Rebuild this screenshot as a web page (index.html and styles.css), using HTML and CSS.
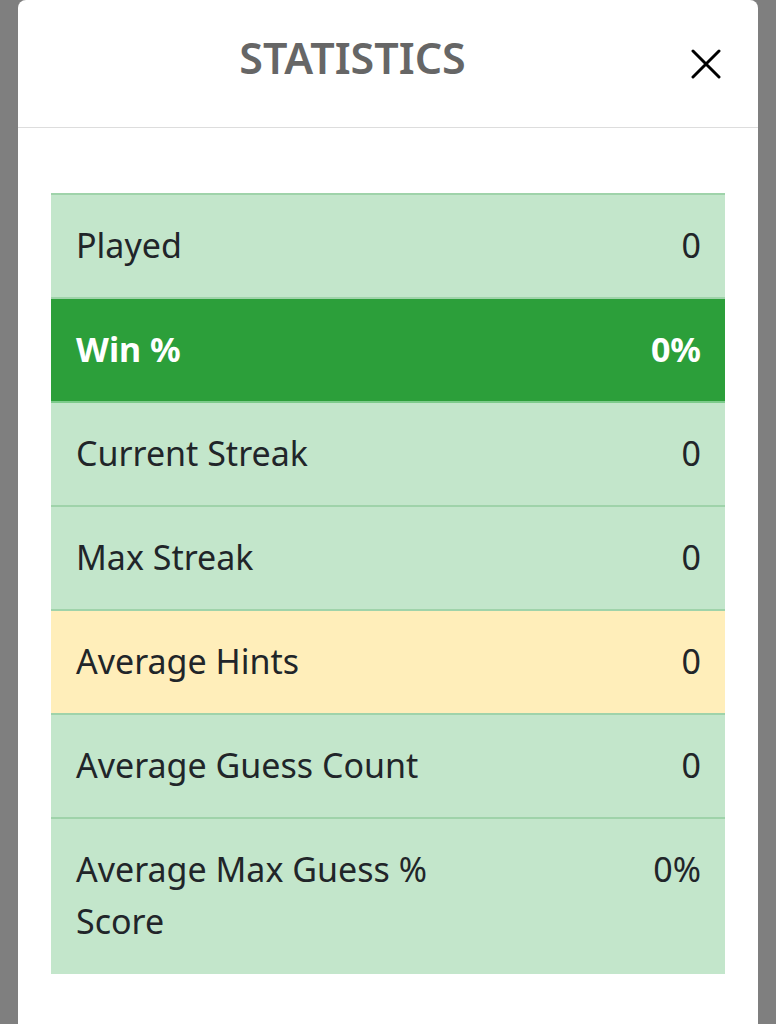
FILE: index.html
```html
<!DOCTYPE html>
<html>
<head>
<meta charset="utf-8">
<link rel="stylesheet" href="styles.css">
</head>
<body>
<div class="modal">
  <div class="modal-header">
    <h1 class="title">STATISTICS</h1>
    <button class="close" aria-label="Close">
      <svg width="30" height="30" viewBox="0 0 30 30"><path d="M2 2 L28 28 M28 2 L2 28" stroke="#000" stroke-width="3" stroke-linecap="round" fill="none"/></svg>
    </button>
  </div>
  <div class="modal-body">
    <div class="stats">
      <div class="row success"><div class="label">Played</div><div class="value">0</div></div>
      <div class="row win"><div class="label">Win %</div><div class="value">0%</div></div>
      <div class="row success"><div class="label">Current Streak</div><div class="value">0</div></div>
      <div class="row success"><div class="label">Max Streak</div><div class="value">0</div></div>
      <div class="row warning"><div class="label">Average Hints</div><div class="value">0</div></div>
      <div class="row success"><div class="label">Average Guess Count</div><div class="value">0</div></div>
      <div class="row success last"><div class="label">Average Max Guess % Score</div><div class="value">0%</div></div>
    </div>
  </div>
</div>
</body>
</html>
```

FILE: styles.css
```css
html, body {
  margin: 0;
  padding: 0;
  height: 100%;
}
body {
  background: #7f7f7f;
  font-family: "Noto Sans", "Open Sans", sans-serif;
  overflow: hidden;
}
.modal {
  margin: 0 18px;
  height: 1024px;
  background: #fff;
  border-radius: 8px 8px 0 0;
}
.modal-header {
  height: 127px;
  border-bottom: 1px solid #dddddd;
  display: flex;
  align-items: center;
  padding: 0 37px 0 32px;
}
.title {
  flex: 1;
  margin: 0;
  text-align: center;
  font-size: 43px;
  font-weight: 600;
  color: #666666;
  line-height: 1;
  letter-spacing: 0;
  position: relative;
  top: -6px;
}
.close {
  border: 0;
  background: none;
  padding: 0;
  margin-left: 36px;
  width: 30px;
  height: 30px;
  display: flex;
}
.modal-body {
  padding: 65px 33px 0 33px;
}
.stats {
  border-top: 2px solid #9fd3aa;
}
.row {
  display: grid;
  grid-template-columns: 410px 1fr;
  padding: 24px 24px 26px 25px;
  font-size: 34px;
  line-height: 52px;
  color: #212529;
  border-bottom: 2px solid #9fd3aa;
  background: #c3e6cb;
}
.row.last {
  border-bottom: 0;
  padding-bottom: 27px;
}
.row.win {
  background: #2c9f3a;
  color: #fff;
  font-weight: 700;
  border-bottom-color: #7ccb8b;
}
.row.warning {
  background: #ffeeba;
  border-bottom-color: #9fd3aa;
}
.value {
  text-align: right;
}
```
